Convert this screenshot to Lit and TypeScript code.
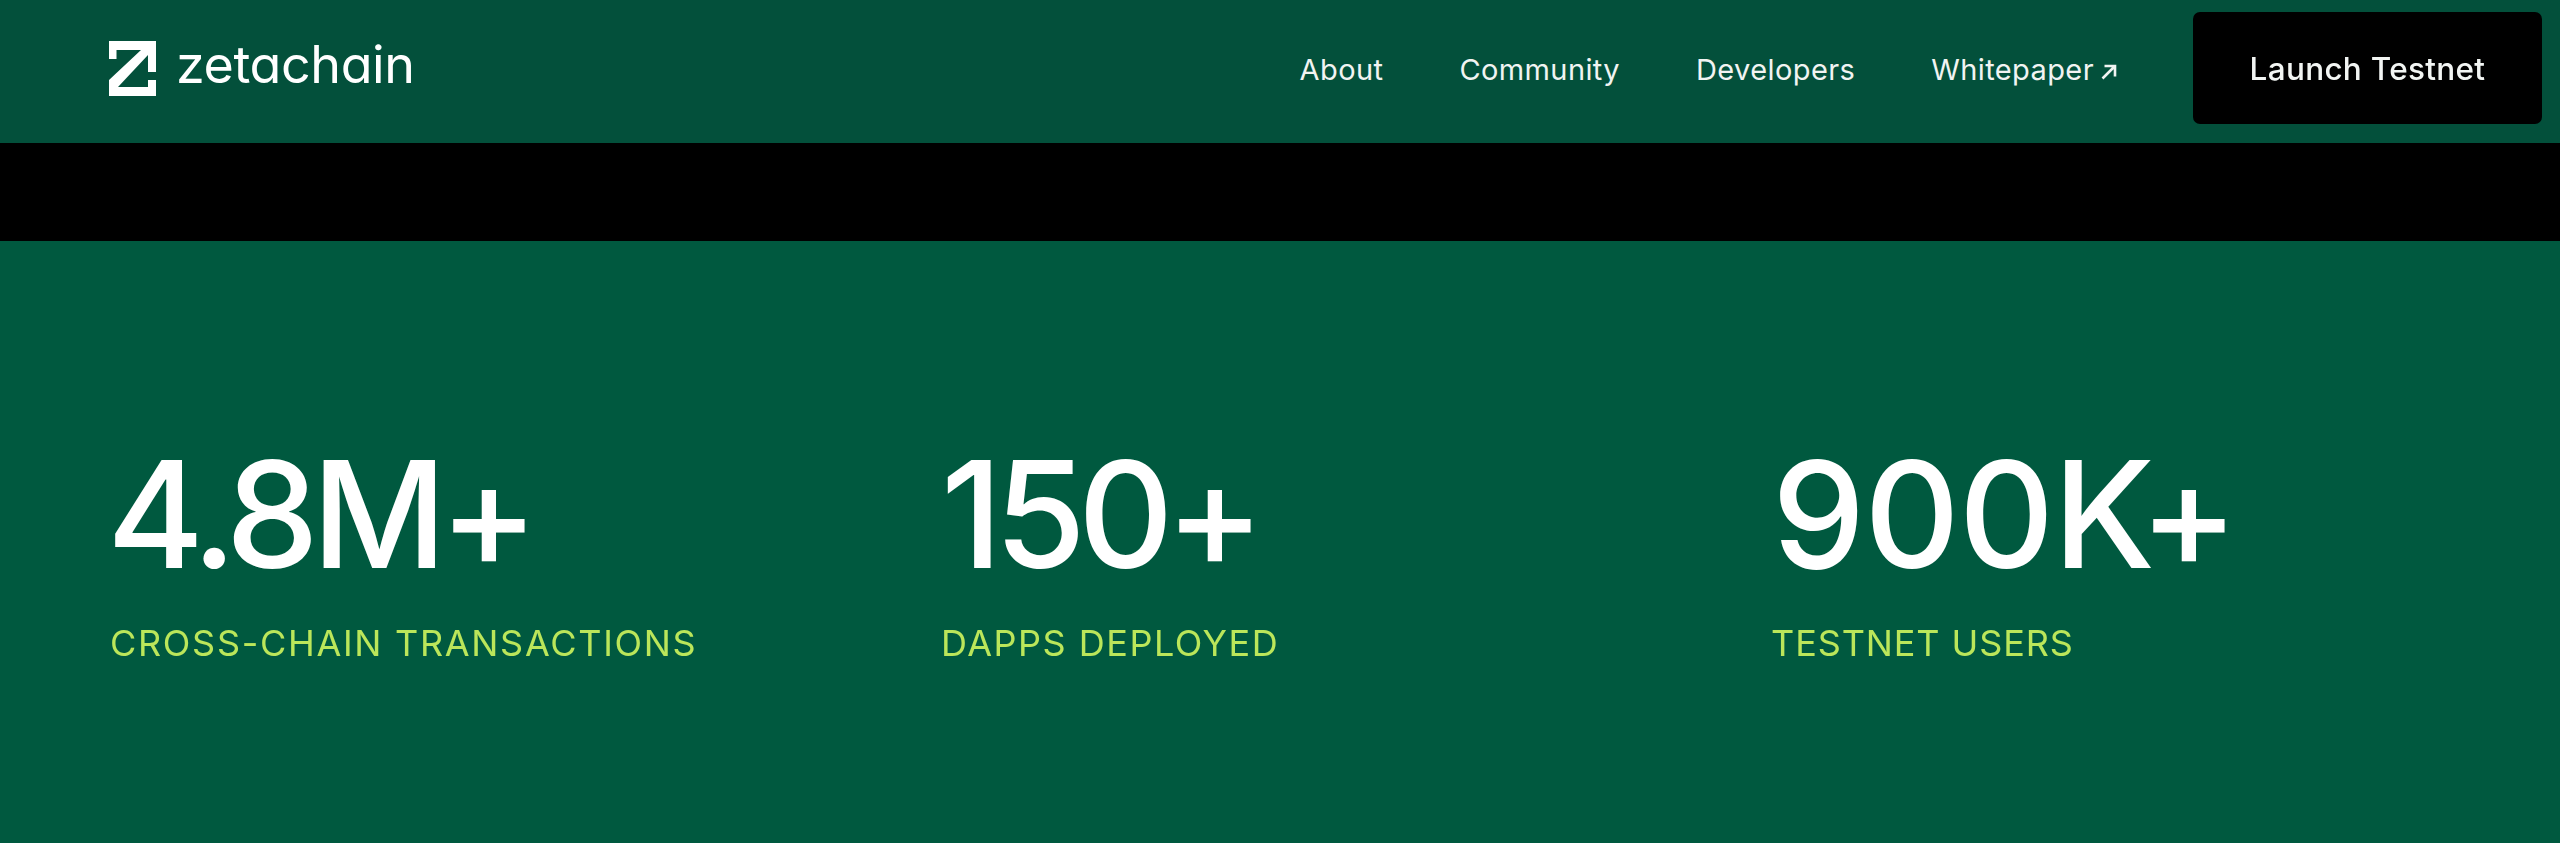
import { LitElement, html, css, svg } from "lit";
import { customElement } from "lit/decorators.js";

const stats = [
  { value: "4.8M+", label: "CROSS-CHAIN TRANSACTIONS", cls: "first" },
  { value: "150+", label: "DAPPS DEPLOYED", cls: "second" },
  { value: "900K+", label: "TESTNET USERS", cls: "third" },
];

@customElement("app-root")
export class AppRoot extends LitElement {
  static styles = css`
    :host { display: block; height: 843px; overflow: hidden; background: #00593f; font-family: Inter, "Liberation Sans", sans-serif; color: #fff; }
    .page { filter: blur(0.5px); }
    header { height: 143px; background: #03503b; display: flex; align-items: center; justify-content: space-between; padding: 0 18px 7px 109px; box-sizing: border-box; }
    .brand { display: flex; align-items: center; gap: 20px; }
    .mark { width: 47px; height: 55px; display: block; }
    .word { font-size: 52px; line-height: 56px; letter-spacing: -0.4px; font-weight: 400; font-feature-settings: "cv11" 1, "ss03" 1; margin-top: -7px; }
    nav { display: flex; align-items: center; }
    .links { display: flex; gap: 76px; margin-right: 76px; margin-top: 3px; font-size: 29px; line-height: 34px; font-weight: 400; letter-spacing: 0.4px; color: #f1f4f2; }
    .ext { display: flex; align-items: center; gap: 7px; }
    .ext svg { width: 16px; height: 16px; display: block; margin-top: 4px; }
    .cta { width: 349px; height: 112px; border-radius: 7px; background: #000; color: #f2f5f3; display: flex; align-items: center; justify-content: center; font-size: 31.5px; font-weight: 500; letter-spacing: 0.3px; }
    .band { height: 98px; background: #000; }
    .stats { display: grid; grid-template-columns: repeat(3, 678px); column-gap: 153px; padding: 200px 0 0 110px; }
    .value { font-size: 148px; line-height: 148px; font-weight: 500; }
    .first .value { letter-spacing: -7.3px; margin-left: -3px; }
    .second .value { letter-spacing: -8px; }
    .third .value { letter-spacing: -1px; }
    .label { margin-top: 32px; font-size: 36px; line-height: 44px; font-weight: 400; letter-spacing: 1.5px; color: #bbe65a; }
    .first .label { letter-spacing: 1.7px; }
    .third .label { letter-spacing: 0.9px; margin-left: -1px; }
  `;

  render() {
    return html`<div class="page">
      <header>
        <div class="brand">
          <svg class="mark" viewBox="0 0 47 55" fill="#fff">
            <path d="M0 0H47V31H39V14L9 46H39V39H47V55H0V39L32 9H7.5V18H0Z" />
          </svg>
          <span class="word">zetachain</span>
        </div>
        <nav>
          <div class="links">
            <span>About</span><span>Community</span><span>Developers</span>
            <span class="ext">Whitepaper
              ${svg`<svg viewBox="0 0 16 16" fill="none" stroke="#f1f4f2" stroke-width="2.6"><path d="M1.5 14.5L13.5 2.5M3.5 2H14V12.5" /></svg>`}
            </span>
          </div>
          <div class="cta">Launch Testnet</div>
        </nav>
      </header>
      <div class="band"></div>
      <section class="stats">
        ${stats.map((s) => html`<div class=${s.cls}><div class="value">${s.value}</div><div class="label">${s.label}</div></div>`)}
      </section>
    </div>`;
  }
}
